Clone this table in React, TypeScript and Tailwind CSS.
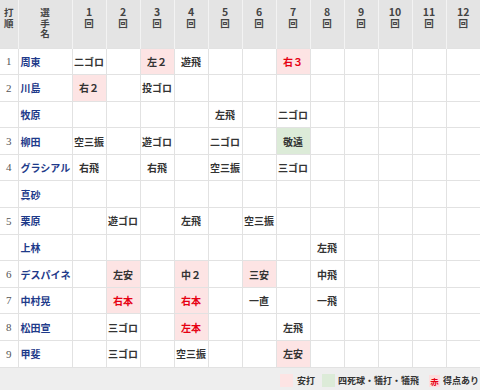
import React from "react";

type Cell = { t: string; k?: "hit" | "walk"; run?: boolean };

const players: { no: string; name: string; at: Record<number, Cell> }[] = [
  { no: "1", name: "周東", at: { 1: { t: "二ゴロ" }, 3: { t: "左２", k: "hit" }, 4: { t: "遊飛" }, 7: { t: "右３", k: "hit", run: true } } },
  { no: "2", name: "川島", at: { 1: { t: "右２", k: "hit" }, 3: { t: "投ゴロ" } } },
  { no: "", name: "牧原", at: { 5: { t: "左飛" }, 7: { t: "二ゴロ" } } },
  { no: "3", name: "柳田", at: { 1: { t: "空三振" }, 3: { t: "遊ゴロ" }, 5: { t: "二ゴロ" }, 7: { t: "敬遠", k: "walk" } } },
  { no: "4", name: "グラシアル", at: { 1: { t: "右飛" }, 3: { t: "右飛" }, 5: { t: "空三振" }, 7: { t: "三ゴロ" } } },
  { no: "", name: "真砂", at: {} },
  { no: "5", name: "栗原", at: { 2: { t: "遊ゴロ" }, 4: { t: "左飛" }, 6: { t: "空三振" } } },
  { no: "", name: "上林", at: { 8: { t: "左飛" } } },
  { no: "6", name: "デスパイネ", at: { 2: { t: "左安", k: "hit" }, 4: { t: "中２", k: "hit" }, 6: { t: "三安", k: "hit" }, 8: { t: "中飛" } } },
  { no: "7", name: "中村晃", at: { 2: { t: "右本", k: "hit", run: true }, 4: { t: "右本", k: "hit", run: true }, 6: { t: "一直" }, 8: { t: "一飛" } } },
  { no: "8", name: "松田宣", at: { 2: { t: "三ゴロ" }, 4: { t: "左本", k: "hit", run: true }, 7: { t: "左飛" } } },
  { no: "9", name: "甲斐", at: { 2: { t: "三ゴロ" }, 4: { t: "空三振" }, 7: { t: "左安", k: "hit" } } },
];

const innings = [1, 2, 3, 4, 5, 6, 7, 8, 9, 10, 11, 12];

export default function App() {
  return (
    <div className="w-[480px] h-[390px] overflow-hidden bg-white text-[10px] text-[#333] font-['Noto_Sans_CJK_JP','Noto_Sans',sans-serif]">
      <table className="w-[480px] table-fixed border-collapse">
        <colgroup>
          <col className="w-[18px]" />
          <col className="w-[54px]" />
          {innings.map((i) => (
            <col key={i} className="w-[34px]" />
          ))}
        </colgroup>
        <thead>
          <tr className="h-[48px] bg-[#e4e4e4] text-[#444] text-[9.5px] leading-[10.5px]">
            <th className="align-top pt-[7px] border-r border-[#f3f3f3] font-bold">
              打<br />順
            </th>
            <th className="align-top pt-[7px] border-r border-[#f3f3f3] font-bold">
              選<br />手<br />名
            </th>
            {innings.map((i) => (
              <th key={i} className="align-top pt-[7px] border-r border-[#f3f3f3] last:border-r-0 font-bold">
                <span className="text-[10.5px]">{i}</span>
                <br />回
              </th>
            ))}
          </tr>
        </thead>
        <tbody>
          {players.map((p, r) => (
            <tr key={r} className="h-[26.6px]">
              <td className="border border-[#e2e2e2] border-l-0 text-center text-[#555] font-['Liberation_Serif',serif] text-[11px]">
                {p.no}
              </td>
              <td className="border border-[#e2e2e2] pl-[2px] text-[#1e3a8a] font-bold whitespace-nowrap">{p.name}</td>
              {innings.map((i) => {
                const c = p.at[i];
                const bg = c?.k === "hit" ? "bg-[#fde4e4]" : c?.k === "walk" ? "bg-[#dcebd8]" : "";
                return (
                  <td
                    key={i}
                    className={`border border-[#e2e2e2] last:border-r-0 text-center font-bold whitespace-nowrap ${bg} ${
                      c?.run ? "text-[#e60012]" : ""
                    }`}
                  >
                    {c?.t}
                  </td>
                );
              })}
            </tr>
          ))}
        </tbody>
      </table>

      {/* legend */}
      <div className="h-[23px] bg-[#eeeeee] flex items-center justify-end pr-[1px] pt-[3px] text-[9px] font-bold text-[#333]">
        <span className="w-[13px] h-[13px] bg-[#fde4e4] mr-[4px]" />
        <span className="mr-[7px]">安打</span>
        <span className="w-[13px] h-[13px] bg-[#dcebd8] mr-[3px]" />
        <span className="mr-[10px]">四死球・犠打・犠飛</span>
        <span className="w-[11px] h-[12px] bg-[#fddede] text-[#e60012] text-[8.5px] leading-[12px] text-center mr-[3px]">赤</span>
        <span>得点あり</span>
      </div>
    </div>
  );
}
